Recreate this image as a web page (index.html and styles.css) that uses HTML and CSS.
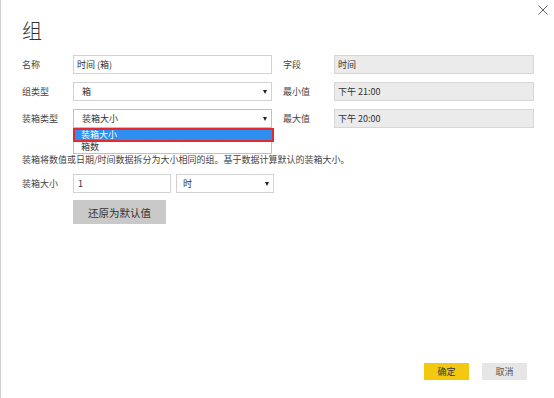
FILE: index.html
```html
<!DOCTYPE html>
<html lang="zh-CN">
<head>
<meta charset="utf-8">
<link rel="stylesheet" href="styles.css">
</head>
<body>
<div class="dialog">
  <button class="close" aria-label="关闭">
    <svg width="10" height="10" viewBox="0 0 10 10"><path d="M0.5 0.5L9.5 9.5M9.5 0.5L0.5 9.5" stroke="#666" stroke-width="1" fill="none"/></svg>
  </button>
  <h1 class="title">组</h1>
  <div class="form">
    <span class="label">名称</span>
    <div class="input">时间 (箱)</div>
    <span class="label label-right">字段</span>
    <div class="input readonly">时间</div>

    <span class="label">组类型</span>
    <div class="input select"><span>箱</span><span class="arrow"></span></div>
    <span class="label label-right">最小值</span>
    <div class="input readonly">下午 21:00</div>

    <span class="label">装箱类型</span>
    <div class="select-wrap">
      <div class="input select focused"><span>装箱大小</span><span class="arrow"></span></div>
      <ul class="dropdown">
        <li class="option selected">装箱大小</li>
        <li class="option">箱数</li>
      </ul>
    </div>
    <span class="label label-right">最大值</span>
    <div class="input readonly">下午 20:00</div>
  </div>
  <p class="desc">装箱将数值或日期/时间数据拆分为大小相同的组。基于数据计算默认的装箱大小。</p>
  <div class="size-row">
    <span class="label">装箱大小</span>
    <div class="input size-input">1</div>
    <div class="input select unit"><span>时</span><span class="arrow"></span></div>
  </div>
  <button class="reset">还原为默认值</button>
  <div class="footer">
    <button class="btn ok">确定</button>
    <button class="btn cancel">取消</button>
  </div>
</div>
</body>
</html>
```

FILE: styles.css
```css
* { box-sizing: border-box; }
html, body {
  margin: 0;
  padding: 0;
  background: #fff;
}
body {
  font-family: "Noto Sans CJK SC", "Noto Sans", "Liberation Sans", sans-serif;
  color: #444;
  font-size: 9px;
}
.dialog {
  position: relative;
  height: 398px;
  border-left: 1px solid #cfcfcf;
  padding: 21px 27px 18px 21px;
  display: flex;
  flex-direction: column;
}
.close {
  position: absolute;
  top: 5px;
  right: 6px;
  width: 10px;
  height: 10px;
  padding: 0;
  border: 0;
  background: none;
  display: flex;
}
.title {
  margin: 0 0 14px;
  font-size: 20px;
  line-height: 20px;
  font-weight: 300;
  color: #333;
}
.form {
  display: grid;
  grid-template-columns: 51px 199px 62px 200px;
  grid-auto-rows: 19px;
  row-gap: 8px;
  align-items: center;
}
.label {
  font-size: 9px;
  line-height: 12px;
  color: #444;
}
.label-right { padding-left: 11px; }
.input {
  height: 19px;
  border: 1px solid #d2d2d2;
  background: #fff;
  padding: 0 3px;
  display: flex;
  align-items: center;
  font-size: 9px;
  color: #333;
  white-space: nowrap;
}
.readonly {
  background: #ebebeb;
  border-color: #d6d6d6;
}
.select {
  padding: 0 4px 0 8px;
}
.arrow {
  margin-left: auto;
  width: 0;
  height: 0;
  border-left: 2.5px solid transparent;
  border-right: 2.5px solid transparent;
  border-top: 4px solid #222;
}
.focused { border-color: #a9c4e6; }
.select-wrap {
  position: relative;
  height: 19px;
}
.dropdown {
  position: absolute;
  left: 0;
  top: 19px;
  width: 199px;
  margin: 0;
  padding: 0 0 1px;
  list-style: none;
  background: #fff;
  border: 1px solid #a9c4e6;
  border-top: 0;
  z-index: 2;
}
.option {
  height: 10px;
  line-height: 10px;
  padding-left: 7px;
  font-size: 9px;
  color: #333;
}
.option.selected {
  height: 14px;
  line-height: 10px;
  margin: 0 -3px 0 -1px;
  padding-left: 6px;
  background: #2e8ff0;
  color: #fff;
  border: 2px solid #e52a2f;
}
.desc {
  margin: 26px 0 8px;
  font-size: 9px;
  line-height: 12px;
  color: #444;
  white-space: nowrap;
}
.size-row {
  display: flex;
  align-items: center;
  height: 19px;
}
.size-row .label { width: 51px; }
.size-input { width: 98px; padding-left: 4px; }
.unit { width: 98px; margin-left: 5px; padding-left: 6px; }
.reset {
  align-self: flex-start;
  margin: 7px 0 0 51px;
  width: 93px;
  height: 24px;
  border: 0;
  background: #c9c9c9;
  color: #333;
  font-family: inherit;
  font-size: 10.5px;
  padding: 0;
}
.footer {
  margin-top: auto;
  display: flex;
  justify-content: flex-end;
  gap: 13px;
}
.btn {
  width: 45px;
  height: 17px;
  border: 0;
  padding: 0;
  font-family: inherit;
  font-size: 9px;
  color: #333;
}
.ok { background: #f2c811; }
.cancel { background: #e6e6e6; color: #555; }
```
